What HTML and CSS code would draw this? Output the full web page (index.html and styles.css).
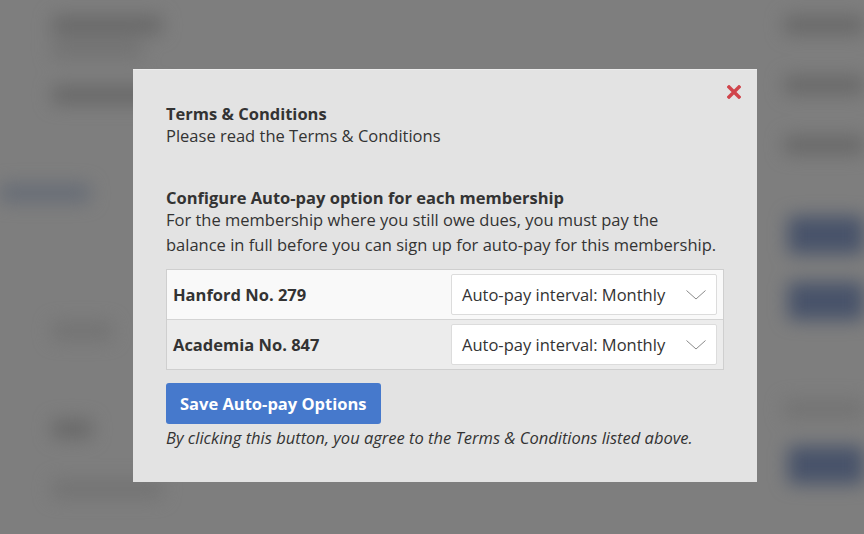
FILE: index.html
```html
<!DOCTYPE html>
<html lang="en">
<head>
<meta charset="utf-8">
<title>Terms &amp; Conditions</title>
<link rel="stylesheet" href="styles.css">
</head>
<body>
<div class="backdrop" aria-hidden="true">
  <div class="bg-left">
    <div class="blob dark w110"></div>
    <div class="blob mid w90"></div>
    <div class="blob dark w115 gap-sm"></div>
    <div class="blob bluegray w90 gap-lg"></div>
    <div class="blob mid w60 gap-xl"></div>
    <div class="blob dark w40 gap-lg"></div>
    <div class="blob mid w110 gap-md"></div>
  </div>
  <div class="bg-right">
    <div class="blob dark w80"></div>
    <div class="blob dark w80 gap-md"></div>
    <div class="blob dark w80 gap-md"></div>
    <div class="btnblob gap-btn"></div>
    <div class="btnblob gap-sm"></div>
    <div class="blob mid w80 gap-lg"></div>
    <div class="btnblob gap-sm"></div>
  </div>
</div>

<div class="modal" role="dialog" aria-labelledby="tc-title">
  <button class="close" aria-label="Close">
    <svg width="14" height="14" viewBox="0 0 14 14"><path d="M2 2 L12 12 M12 2 L2 12" stroke="#d0454c" stroke-width="3.4" stroke-linecap="square" fill="none"/></svg>
  </button>
  <h2 id="tc-title" class="title">Terms &amp; Conditions</h2>
  <p class="lead">Please read the Terms &amp; Conditions</p>

  <h2 class="title section">Configure Auto-pay option for each membership</h2>
  <p class="desc">For the membership where you still owe dues, you must pay the<br>balance in full before you can sign up for auto-pay for this membership.</p>

  <div class="table">
    <div class="row odd">
      <span class="name">Hanford No. 279</span>
      <div class="select">Auto-pay interval: Monthly
        <svg class="chev" width="20" height="10" viewBox="0 0 20 10"><path d="M0.5 0.5 L10 9 L19.5 0.5" stroke="#8a8a8a" stroke-width="1" fill="none"/></svg>
      </div>
    </div>
    <div class="row even">
      <span class="name">Academia No. 847</span>
      <div class="select">Auto-pay interval: Monthly
        <svg class="chev" width="20" height="10" viewBox="0 0 20 10"><path d="M0.5 0.5 L10 9 L19.5 0.5" stroke="#8a8a8a" stroke-width="1" fill="none"/></svg>
      </div>
    </div>
  </div>

  <button class="save">Save Auto-pay Options</button>
  <p class="note">By clicking this button, you agree to the Terms &amp; Conditions listed above.</p>
</div>
</body>
</html>
```

FILE: styles.css
```css
html, body {
  margin: 0;
  padding: 0;
  width: 864px;
  height: 534px;
  overflow: hidden;
  background: #7e7e7e;
  font-family: "Open Sans", "Noto Sans", sans-serif;
}

.backdrop {
  display: flex;
  justify-content: space-between;
  height: 534px;
  filter: blur(9px);
}

.bg-left {
  display: flex;
  flex-direction: column;
  padding: 10px 0 0 52px;
  width: 140px;
}

.bg-right {
  display: flex;
  flex-direction: column;
  align-items: flex-end;
  padding-top: 10px;
  width: 80px;
}

.blob {
  height: 18px;
  border-radius: 4px;
  margin-top: 6px;
}
.dark { background: #686868; }
.mid { background: #737373; }
.bluegray { background: #666c76; margin-left: -52px; }
.w40 { width: 40px; }
.w60 { width: 60px; }
.w80 { width: 80px; }
.w90 { width: 90px; }
.w110 { width: 110px; }
.w115 { width: 115px; }
.gap-sm { margin-top: 28px; }
.gap-md { margin-top: 42px; }
.gap-btn { margin-top: 62px; }
.gap-lg { margin-top: 80px; }
.gap-xl { margin-top: 120px; }

.btnblob {
  width: 76px;
  height: 38px;
  border-radius: 4px;
  background: #48536a;
}

.modal {
  position: absolute;
  left: 133px;
  top: 69px;
  width: 624px;
  height: 413px;
  box-sizing: border-box;
  padding: 33px 33px;
  background: #e3e3e3;
  color: #333;
  border-top: 1px solid #ececec;
  font-size: 16.5px;
}

.close {
  position: absolute;
  top: 15px;
  right: 16px;
  width: 14px;
  height: 14px;
  padding: 0;
  border: 0;
  background: none;
  line-height: 0;
}

.title {
  margin: 0;
  font-size: 16.5px;
  font-weight: 700;
  line-height: 22px;
}

.lead {
  margin: 0;
  line-height: 22px;
}

.section {
  margin-top: 40px;
}

.desc {
  margin: -2px 0 0;
  line-height: 25px;
}

.table {
  margin-top: 12px;
  border: 1px solid #cfcfcf;
}

.row {
  display: flex;
  align-items: center;
  justify-content: space-between;
  height: 49px;
  padding: 0 6px;
}
.odd { background: #f9f9f9; border-bottom: 1px solid #d4d4d4; }
.even { background: #ececec; }

.name {
  font-weight: 700;
  color: #333;
}

.select {
  display: flex;
  align-items: center;
  justify-content: space-between;
  box-sizing: border-box;
  width: 266px;
  height: 41px;
  padding: 0 10px 0 10px;
  background: #fff;
  border: 1px solid #dcdcdc;
  border-radius: 2px;
  color: #333;
}

.chev { margin-top: 1px; }

.save {
  display: block;
  margin-top: 13px;
  height: 41px;
  padding: 0 14px;
  border: 0;
  border-radius: 3px;
  background: #4679cc;
  color: #fff;
  font-family: "Open Sans", "Noto Sans", sans-serif;
  font-size: 16.5px;
  font-weight: 700;
}

.note {
  margin: 2px 0 0;
  line-height: 24px;
  font-style: italic;
}
```
